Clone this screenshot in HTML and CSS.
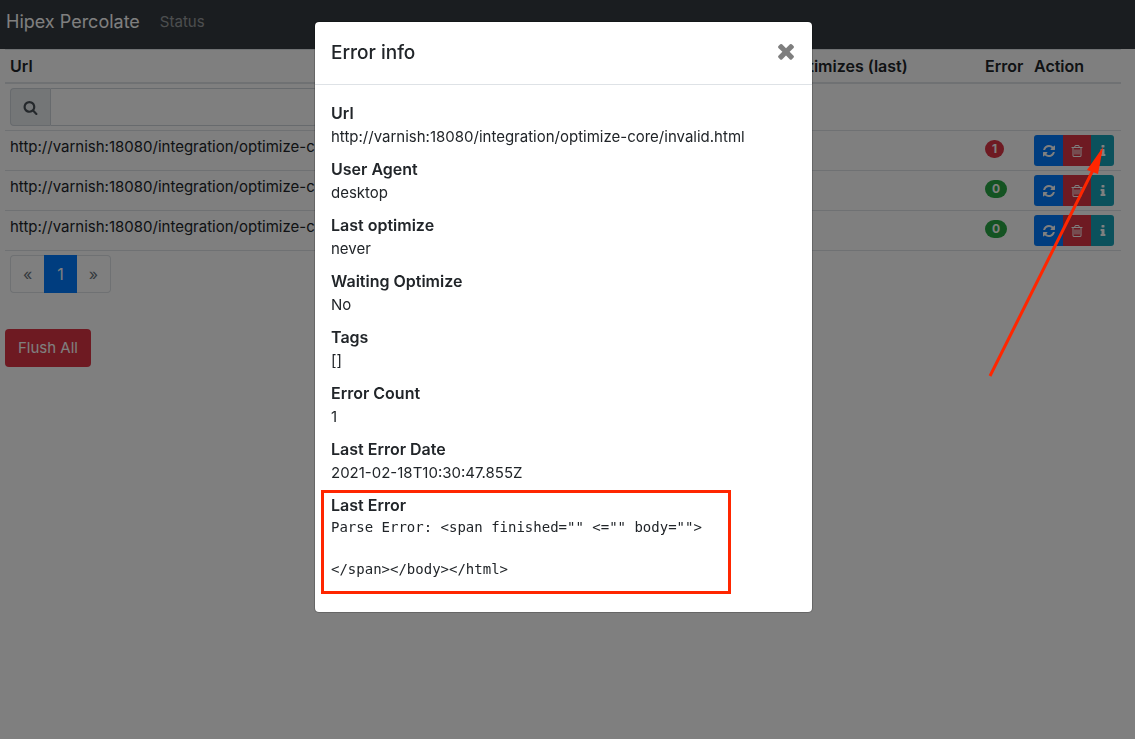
FILE: index.html
```html
<!DOCTYPE html>
<html lang="en">
<head>
<meta charset="utf-8">
<meta name="viewport" content="width=device-width, initial-scale=1">
<title>Hipex Percolate</title>
<link rel="stylesheet" href="styles.css">
</head>
<body>
<svg class="sprite" aria-hidden="true">
  <symbol id="refresh" viewBox="0 0 1792 1792"><path d="M1639 1056q0 5-1 7-64 268-268 434.5t-478 166.5q-146 0-282.5-55t-243.5-157l-129 129q-19 19-45 19t-45-19-19-45v-448q0-26 19-45t45-19h448q26 0 45 19t19 45-19 45l-137 137q71 66 161 102t187 36q134 0 250-65t186-179q11-17 53-117 8-23 30-23h192q13 0 22.5 9.5t9.5 22.5zm25-800v448q0 26-19 45t-45 19h-448q-26 0-45-19t-19-45 19-45l138-138q-148-137-349-137-134 0-250 65t-186 179q-11 17-53 117-8 23-30 23h-199q-13 0-22.5-9.5t-9.5-22.5v-7q65-268 270-434.5t480-166.5q146 0 284 55.5t245 156.5l130-129q19-19 45-19t45 19 19 45z"/></symbol>
  <symbol id="trash" viewBox="0 0 1792 1792"><path d="M704 736v576q0 14-9 23t-23 9h-64q-14 0-23-9t-9-23v-576q0-14 9-23t23-9h64q14 0 23 9t9 23zm256 0v576q0 14-9 23t-23 9h-64q-14 0-23-9t-9-23v-576q0-14 9-23t23-9h64q14 0 23 9t9 23zm256 0v576q0 14-9 23t-23 9h-64q-14 0-23-9t-9-23v-576q0-14 9-23t23-9h64q14 0 23 9t9 23zm128 724v-948h-896v948q0 22 7 40.5t14.5 27 10.5 8.5h832q3 0 10.5-8.5t14.5-27 7-40.5zm-672-1076h448l-48-117q-7-9-17-11h-317q-10 2-17 11zm928 32v64q0 14-9 23t-23 9h-96v948q0 83-47 143.5t-113 60.5h-832q-66 0-113-58.5t-47-141.5v-952h-96q-14 0-23-9t-9-23v-64q0-14 9-23t23-9h309l70-167q15-37 54-63t79-26h320q40 0 79 26t54 63l70 167h309q14 0 23 9t9 23z"/></symbol>
  <symbol id="info" viewBox="0 0 1792 1792"><path d="M1216 1344v128q0 26-19 45t-45 19h-512q-26 0-45-19t-19-45v-128q0-26 19-45t45-19h64v-384h-64q-26 0-45-19t-19-45v-128q0-26 19-45t45-19h384q26 0 45 19t19 45v576h64q26 0 45 19t19 45zm-128-1152v192q0 26-19 45t-45 19h-256q-26 0-45-19t-19-45v-192q0-26 19-45t45-19h256q26 0 45 19t19 45z"/></symbol>
  <symbol id="search" viewBox="0 0 1792 1792"><path d="M1216 832q0-185-131.5-316.5t-316.5-131.5-316.5 131.5-131.5 316.5 131.5 316.5 316.5 131.5 316.5-131.5 131.5-316.5zm512 832q0 52-38 90t-90 38q-54 0-90-38l-343-342q-179 124-399 124-143 0-273.5-55.5t-225-150-150-225-55.5-273.5 55.5-273.5 150-225 225-150 273.5-55.5 273.5 55.5 225 150 150 225 55.5 273.5q0 220-124 399l343 343q37 37 37 90z"/></symbol>
  <symbol id="times" viewBox="0 0 1792 1792"><path d="M1490 1322q0 40-28 68l-136 136q-28 28-68 28t-68-28l-294-294-294 294q-28 28-68 28t-68-28l-136-136q-28-28-28-68t28-68l294-294-294-294q-28-28-28-68t28-68l136-136q28-28 68-28t68 28l294 294 294-294q28-28 68-28t68 28l136 136q28 28 28 68t-28 68l-294 294 294 294q28 28 28 68z"/></symbol>
</svg>

<nav class="navbar">
  <a class="brand" href="#">Hipex Percolate</a>
  <a class="nav-link" href="#">Status</a>
</nav>

<main class="page">
  <table class="table">
    <colgroup>
      <col class="col-url">
      <col>
      <col class="col-optimizes">
      <col class="col-error">
      <col class="col-action">
    </colgroup>
    <thead>
      <tr><th>Url</th><th></th><th>Optimizes (last)</th><th>Error</th><th>Action</th></tr>
    </thead>
    <tbody>
      <tr class="filter-row">
        <td>
          <div class="input-group">
            <label class="addon" for="url-filter"><svg class="icon icon-search" role="img" aria-label="Search"><use href="#search"/></svg></label>
            <input class="input" id="url-filter" type="text">
          </div>
        </td>
        <td></td><td></td><td></td><td></td>
      </tr>
      <tr>
        <td class="url">http://varnish:18080/integration/optimize-core</td>
        <td></td><td></td>
        <td><span class="badge badge-danger">1</span></td>
        <td><div class="btn-group">
          <button class="btn-sm primary" type="button" aria-label="Refresh"><svg class="icon"><use href="#refresh"/></svg></button>
          <button class="btn-sm danger" type="button" aria-label="Delete"><svg class="icon"><use href="#trash"/></svg></button>
          <button class="btn-sm info" type="button" aria-label="Info"><svg class="icon"><use href="#info"/></svg></button>
        </div></td>
      </tr>
      <tr>
        <td class="url">http://varnish:18080/integration/optimize-core</td>
        <td></td><td></td>
        <td><span class="badge badge-success">0</span></td>
        <td><div class="btn-group">
          <button class="btn-sm primary" type="button" aria-label="Refresh"><svg class="icon"><use href="#refresh"/></svg></button>
          <button class="btn-sm danger" type="button" aria-label="Delete"><svg class="icon"><use href="#trash"/></svg></button>
          <button class="btn-sm info" type="button" aria-label="Info"><svg class="icon"><use href="#info"/></svg></button>
        </div></td>
      </tr>
      <tr>
        <td class="url">http://varnish:18080/integration/optimize-core</td>
        <td></td><td></td>
        <td><span class="badge badge-success">0</span></td>
        <td><div class="btn-group">
          <button class="btn-sm primary" type="button" aria-label="Refresh"><svg class="icon"><use href="#refresh"/></svg></button>
          <button class="btn-sm danger" type="button" aria-label="Delete"><svg class="icon"><use href="#trash"/></svg></button>
          <button class="btn-sm info" type="button" aria-label="Info"><svg class="icon"><use href="#info"/></svg></button>
        </div></td>
      </tr>
    </tbody>
    <tfoot>
      <tr>
        <td colspan="5">
          <ul class="pagination">
            <li><a class="page-link" href="#">«</a></li>
            <li><a class="page-link active" href="#">1</a></li>
            <li><a class="page-link" href="#">»</a></li>
          </ul>
        </td>
      </tr>
    </tfoot>
  </table>
  <button class="btn danger" type="button">Flush All</button>
</main>

<div class="backdrop">
  <section class="modal" role="dialog" aria-labelledby="modal-title">
    <header class="modal-header">
      <h5 class="modal-title" id="modal-title">Error info</h5>
      <button class="close" type="button" aria-label="Close"><svg class="icon icon-close"><use href="#times"/></svg></button>
    </header>
    <dl class="modal-body">
      <div class="entry"><dt>Url</dt><dd>http://varnish:18080/integration/optimize-core/invalid.html</dd></div>
      <div class="entry"><dt>User Agent</dt><dd>desktop</dd></div>
      <div class="entry"><dt>Last optimize</dt><dd>never</dd></div>
      <div class="entry"><dt>Waiting Optimize</dt><dd>No</dd></div>
      <div class="entry"><dt>Tags</dt><dd>[]</dd></div>
      <div class="entry"><dt>Error Count</dt><dd>1</dd></div>
      <div class="entry"><dt>Last Error Date</dt><dd>2021-02-18T10:30:47.855Z</dd></div>
      <div class="entry highlighted"><dt>Last Error</dt><dd><pre class="trace">Parse Error: &lt;span finished="" &lt;="" body=""&gt;

&lt;/span&gt;&lt;/body&gt;&lt;/html&gt;</pre></dd></div>
    </dl>
  </section>
</div>

<svg class="arrow" viewBox="0 0 130 245" aria-hidden="true">
  <path class="arrow-shaft" d="M10 236L114 28"/>
  <path class="arrow-head" d="M123 7L107 30L118 34Z"/>
</svg>
</body>
</html>
```

FILE: styles.css
```css
*,
*::after {
  box-sizing: border-box;
}

body {
  margin: 0;
  font-family: Inter, "Liberation Sans", sans-serif;
  font-size: 15px;
  line-height: 24px;
  color: #212529;
  background: #fff;
}

button,
input {
  font: inherit;
}

.sprite {
  position: absolute;
  width: 0;
  height: 0;
}

.icon {
  display: block;
  width: 14px;
  height: 14px;
  fill: currentColor;
}

.icon-search {
  width: 15px;
  height: 15px;
}

.icon-close {
  width: 24px;
  height: 24px;
}

.navbar {
  display: flex;
  align-items: center;
  gap: 20px;
  padding: 7px 6px 12px;
  background: #343a40;
}

.brand {
  font-size: 18px;
  line-height: 30px;
  color: #fff;
  text-decoration: none;
}

.nav-link {
  color: rgba(255, 255, 255, 0.5);
  text-decoration: none;
}

.page {
  padding: 0 14px 0 5px;
}

.table {
  width: 100%;
  margin-bottom: 32px;
  border-spacing: 0;
  table-layout: fixed;
}

.col-url {
  width: 318px;
}

.col-optimizes {
  width: 199px;
}

.col-error {
  width: 49px;
}

.col-action {
  width: 92px;
}

.table th,
.table td {
  padding: 4px 5px;
  border-top: 1px solid #dee2e6;
  text-align: left;
  vertical-align: top;
  white-space: nowrap;
}

.table th {
  border-bottom: 2px solid #dee2e6;
  font-size: 16px;
  font-weight: 600;
}

.table .filter-row td {
  border-top: 0;
}

.table .url {
  overflow: hidden;
}

.input-group {
  display: flex;
  height: 38px;
}

.addon {
  display: flex;
  align-items: center;
  padding: 0 12px;
  border: 1px solid #ced4da;
  border-right: 0;
  border-radius: 4px 0 0 4px;
  color: #495057;
  background: #e9ecef;
}

.input {
  flex: 1;
  min-width: 0;
  padding: 6px 12px;
  border: 1px solid #ced4da;
  border-radius: 0 4px 4px 0;
}

.badge {
  display: inline-block;
  margin-top: 5px;
  padding: 3px 7px;
  border-radius: 10px;
  font-size: 12px;
  font-weight: 700;
  line-height: 12px;
  color: #fff;
  vertical-align: top;
}

.badge-danger,
.danger {
  background: #dc3545;
}

.badge-success {
  background: #28a745;
}

.primary {
  background: #007bff;
}

.info {
  background: #17a2b8;
}

.btn-group {
  display: flex;
  width: 80px;
  height: 31px;
  border-radius: 3px;
  overflow: hidden;
}

.btn-sm {
  display: flex;
  flex: 28;
  align-items: center;
  justify-content: center;
  padding: 0;
  border: 0;
  color: #fff;
}

.btn-sm.primary {
  flex: 29;
}

.btn-sm.info {
  flex: 23;
}

.pagination {
  display: flex;
  margin: 0;
  padding: 0;
  list-style: none;
}

.page-link {
  display: block;
  padding: 6px 12px;
  border: 1px solid #dee2e6;
  font-size: 16px;
  color: #6c757d;
  text-decoration: none;
}

.page-link.active {
  border-color: #007bff;
  color: #fff;
  background: #007bff;
}

.pagination li:first-child .page-link {
  border-right: 0;
  border-radius: 4px 0 0 4px;
}

.pagination li:last-child .page-link {
  border-left: 0;
  border-radius: 0 4px 4px 0;
}

.btn {
  padding: 7px 13px;
  border: 0;
  border-radius: 4px;
  color: #fff;
}

.backdrop {
  position: fixed;
  inset: 0;
  display: flex;
  align-items: flex-start;
  justify-content: center;
  padding: 21px 8px 21px 0;
  overflow: auto;
  background: rgba(0, 0, 0, 0.5);
}

.modal {
  width: 100%;
  max-width: 499px;
  border: 1px solid rgba(0, 0, 0, 0.2);
  border-radius: 5px;
  background: #fff;
  background-clip: padding-box;
}

.modal-header {
  display: flex;
  align-items: center;
  justify-content: space-between;
  padding: 16px 14px 16px 16px;
  border-bottom: 1px solid #dee2e6;
}

.modal-title {
  margin: 0;
  font-size: 19px;
  font-weight: 500;
  line-height: 30px;
}

.close {
  padding: 0 0 4px;
  border: 0;
  color: #000;
  background: transparent;
  opacity: 0.5;
}

.modal-body {
  margin: 0;
  padding: 16px 16px 32px;
}

.entry {
  margin-bottom: 8px;
}

.entry dt {
  font-size: 16px;
  font-weight: 600;
}

.entry dd {
  margin: 0;
}

.highlighted {
  position: relative;
  margin-bottom: 0;
}

.highlighted::after {
  content: "";
  position: absolute;
  top: -3px;
  bottom: -14px;
  left: -10px;
  width: 410px;
  border: 3px solid #ff2600;
}

.trace {
  margin: 0;
  font-family: "DejaVu Sans Mono", monospace;
  font-size: 14px;
  line-height: 21px;
}

.arrow {
  position: absolute;
  top: 140px;
  right: 25px;
  width: 130px;
  height: 245px;
  pointer-events: none;
}

.arrow-shaft {
  fill: none;
  stroke: #ff2600;
  stroke-width: 3;
}

.arrow-head {
  fill: #ff2600;
}
```
